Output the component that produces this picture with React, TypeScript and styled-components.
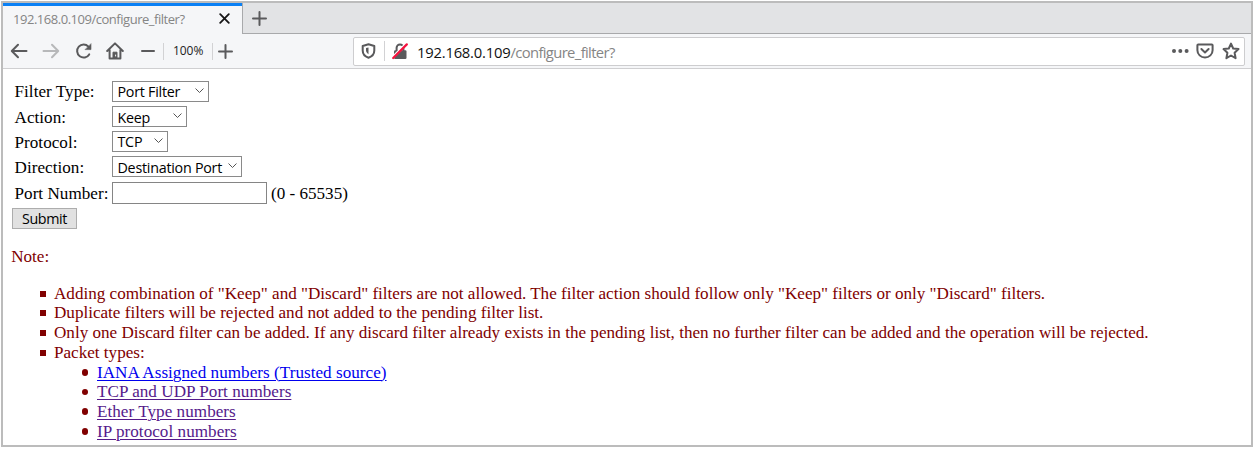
import React from "react";
import styled, { createGlobalStyle } from "styled-components";

const Global = createGlobalStyle`
  *, *::before, *::after { box-sizing: border-box; }
  body { margin: 0; background: #fff; overflow: hidden; }
`;
const ui = `"Open Sans", "Noto Sans", sans-serif`;
const serif = `"Liberation Serif", "Times New Roman", serif`;

const Window = styled.div`
  margin: 1px 0 0 1px;
  width: 1252px;
  height: 446px;
  border: 2px solid #bcbcbc;
  background: #fff;
  display: flex;
  flex-direction: column;
`;
const TabStrip = styled.div`
  height: 31px;
  flex: none;
  display: flex;
  background: #e2e3e5;
`;
const Tab = styled.div`
  width: 239px;
  border-top: 3px solid #0a80f5;
  background: #f5f6f8;
  display: flex;
  align-items: center;
  justify-content: space-between;
  padding: 0 12px 3px 10px;
`;
const TabTitle = styled.span`
  font: 13px/20px ${ui};
  letter-spacing: -0.47px;
  color: #858585;
  white-space: nowrap;
`;
const NewTab = styled.div`
  flex: 1;
  border-left: 1px solid #a8a9ab;
  border-bottom: 1px solid #a8a9ab;
  padding: 8px 0 0 9px;
  line-height: 0;
`;
const Toolbar = styled.div`
  height: 35px;
  flex: none;
  display: flex;
  align-items: center;
  background: #f5f6f8;
  border-bottom: 1px solid #cfcfd1;
  padding: 0 6px 0 7px;
`;
const NavIcons = styled.div`
  display: flex;
  align-items: center;
  width: 343px;
`;
const Icon = styled.svg<{ $gap?: number; $color?: string; $line?: number }>`
  display: block;
  flex: none;
  margin-right: ${(p) => p.$gap ?? 0}px;
  fill: none;
  stroke: ${(p) => p.$color ?? "#5a5a5c"};
  stroke-width: ${(p) => p.$line ?? 2};
  stroke-linecap: round;
  stroke-linejoin: round;
`;
const Divider = styled.span<{ $gap: number; $h: number }>`
  width: 1px;
  height: ${(p) => p.$h}px;
  background: #d2d2d4;
  margin-right: ${(p) => p.$gap}px;
`;
const Zoom = styled.span`
  width: 39px;
  font: 12px/18px ${ui};
  letter-spacing: -0.05px;
  color: #222;
`;
const UrlBar = styled.div`
  width: 892px;
  height: 29px;
  border: 1px solid #cdcdcf;
  border-radius: 2px;
  background: #fff;
  display: flex;
  align-items: center;
  padding: 0 4px 0 7px;
`;
const Url = styled.span`
  flex: 1;
  font: 14.8px/22px ${ui};
  letter-spacing: -0.22px;
  color: #111;
  padding-top: 2px;
`;
const UrlPath = styled.span`
  color: #858585;
  letter-spacing: -0.63px;
`;
const Page = styled.main`
  flex: 1;
  padding: 12px 0 0 9px;
  font: 17.1px/19.7px ${serif};
  color: #000;
`;
const Row = styled.div<{ $h: number }>`
  height: ${(p) => p.$h}px;
  display: flex;
  align-items: flex-start;
  padding-left: 2.5px;
`;
const Label = styled.label<{ $line?: number }>`
  width: 97.5px;
  white-space: nowrap;
  line-height: ${(p) => p.$line ?? 24}px;
  letter-spacing: 0.04px;
`;
const SelectBox = styled.div<{ $w: number; $line: number }>`
  width: ${(p) => p.$w}px;
  height: 21px;
  border: 1px solid #8a8a8a;
  display: flex;
  align-items: flex-start;
  justify-content: space-between;
  padding: 0 4px 0 4.5px;
  font: 14.3px/${(p) => p.$line}px ${ui};
  letter-spacing: -0.25px;
  white-space: nowrap;
  color: #000;

  svg {
    margin-top: 6px;
  }
`;
const PortInput = styled.input`
  width: 155px;
  height: 22px;
  border: 1px solid #858585;
  padding: 0 4px;
  outline: none;
  border-radius: 0;
`;
const Hint = styled.span`
  margin-left: 4px;
  line-height: 23px;
`;
const Submit = styled.button`
  display: block;
  width: 65px;
  height: 21px;
  padding: 0;
  border: 1px solid #adadad;
  border-radius: 0;
  background: #e1e1e1;
  font: 14.3px/19px ${ui};
  letter-spacing: -0.4px;
  color: #000;
`;
const Note = styled.section`
  color: #800000;
  margin-top: 18px;
`;
const NoteTitle = styled.div`
  margin-left: -0.8px;
`;
const Rules = styled.ul`
  list-style: none;
  margin: 17px 0 0;
  padding: 0 0 0 42px;
`;
const Rule = styled.li`
  position: relative;
  white-space: nowrap;
  &::before {
    content: "";
    position: absolute;
    left: -14.4px;
    top: 7px;
    width: 6px;
    height: 6px;
    background: #800000;
  }
`;
const Links = styled.ul`
  list-style: none;
  margin: 0;
  padding: 0 0 0 43px;
`;
const LinkItem = styled.li`
  position: relative;
  &::before {
    content: "";
    position: absolute;
    left: -15.2px;
    top: 6.5px;
    width: 6.5px;
    height: 6.5px;
    border-radius: 50%;
    background: #800000;
  }
`;
const Link = styled.a<{ $visited?: boolean }>`
  color: ${(p) => (p.$visited ? "#551a8b" : "#0000ee")};
  letter-spacing: 0.04px;
  text-decoration: underline;
  text-decoration-thickness: 1px;
  text-underline-offset: 2px;
`;

const Select = ({ w, line = 19, children }: { w: number; line?: number; children: string }) => (
  <SelectBox $w={w} $line={line}>
    <span>{children}</span>
    <Icon width="9" height="6" viewBox="0 0 9 6" $color="#555" $line={1}>
      <path d="M0.8 0.8 4.5 4.5 8.2 0.8" />
    </Icon>
  </SelectBox>
);

export default function App() {
  return (
    <>
      <Global />
      <Window>
        <TabStrip>
          <Tab>
            <TabTitle>192.168.0.109/configure_filter?</TabTitle>
            <Icon width="11" height="11" viewBox="0 0 11 11" $color="#161616" $line={1.8}>
              <path d="M1.2 1.2 9.8 9.8M9.8 1.2 1.2 9.8" />
            </Icon>
          </Tab>
          <NewTab>
            <Icon width="15" height="15" viewBox="0 0 15 15">
              <path d="M7.5 1V14M1 7.5H14" />
            </Icon>
          </NewTab>
        </TabStrip>
        <Toolbar>
          <NavIcons>
            <Icon width="18" height="16" viewBox="0 0 18 16" $gap={14}>
              <path d="M16.5 8H2M8 1.8 1.8 8 8 14.2" />
            </Icon>
            <Icon width="18" height="16" viewBox="0 0 18 16" $gap={15} $color="#b7b8ba">
              <path d="M1.5 8H16M10 1.8 16.2 8 10 14.2" />
            </Icon>
            <Icon width="18" height="18" viewBox="0 0 18 18" $gap={13}>
              <path d="M14.2 12.4A6.5 6.5 0 1 1 13.4 4.6L15 6.2" />
              <path d="M16 2V7.6H10.4Z" fill="#5a5a5c" strokeWidth="0.6" />
            </Icon>
            <Icon width="18" height="18" viewBox="0 0 18 18" $gap={17}>
              <path d="M1.2 9 9 1.4 16.8 9M3.6 8V16.4H14.4V8" />
              <path d="M7 16V10.2H11V16Z" fill="#5a5a5c" strokeWidth="1" />
              <path d="M9.6 13V14" stroke="#f5f6f8" strokeWidth="1" />
            </Icon>
            <Icon width="14" height="14" viewBox="0 0 14 14" $gap={8}>
              <path d="M1 7H13" />
            </Icon>
            <Divider $h={17} $gap={9} />
            <Zoom>100%</Zoom>
            <Divider $h={17} $gap={5} />
            <Icon width="15" height="15" viewBox="0 0 15 15">
              <path d="M7.5 1V14M1 7.5H14" />
            </Icon>
          </NavIcons>
          <UrlBar>
            <Icon width="15" height="16" viewBox="0 0 15 16" $gap={8}>
              <path d="M7.5 1.3 13.3 3V7.5C13.3 11 10.5 13.7 7.5 14.7 4.5 13.7 1.7 11 1.7 7.5V3Z" />
              <path d="M7.5 4.5V11.3C5.6 10 5 8.6 5 7V5Z" fill="#5a5a5c" stroke="none" />
            </Icon>
            <Divider $h={20} $gap={7} />
            <Icon width="16" height="17" viewBox="0 0 16 17" $gap={9}>
              <path d="M4.6 8V4.8a3.4 3.4 0 0 1 6.8 0V8" />
              <rect x="2" y="7.2" width="12.5" height="8.8" rx="1.2" fill="#5a5a5c" stroke="none" />
              <path d="M1.2 14 13.6 1.6" stroke="#fff" strokeWidth="3" strokeLinecap="butt" />
              <path d="M1.2 15 14.8 1.4" stroke="#f5123e" strokeWidth="2.2" />
            </Icon>
            <Url>
              192.168.0.109<UrlPath>/configure_filter?</UrlPath>
            </Url>
            <Icon width="18" height="6" viewBox="0 0 18 6" $gap={7} $color="none">
              <g fill="#5a5a5c">
                <circle cx="3" cy="3" r="2" />
                <circle cx="9.3" cy="3" r="2" />
                <circle cx="15.6" cy="3" r="2" />
              </g>
            </Icon>
            <Icon width="18" height="16" viewBox="0 0 18 16" $gap={8}>
              <path d="M2.2 1.5H15.8Q16.6 1.5 16.6 2.3V7.2A7.6 7.3 0 0 1 1.4 7.2V2.3Q1.4 1.5 2.2 1.5Z" />
              <path d="M5.4 6 9 9.4 12.6 6" />
            </Icon>
            <Icon width="18" height="18" viewBox="0 0 18 18">
              <path d="M9 1.6 11.2 6.5 16.5 7.1 12.6 10.8 13.6 16.2 9 13.5 4.4 16.2 5.4 10.8 1.5 7.1 6.8 6.5Z" />
            </Icon>
          </UrlBar>
        </Toolbar>
        <Page>
          <Row $h={25}>
            <Label $line={22}>Filter Type:</Label>
            <Select w={97}>Port Filter</Select>
          </Row>
          <Row $h={25}>
            <Label>Action:</Label>
            <Select w={75} line={21}>Keep</Select>
          </Row>
          <Row $h={25}>
            <Label $line={23}>Protocol:</Label>
            <Select w={56}>TCP</Select>
          </Row>
          <Row $h={26}>
            <Label>Direction:</Label>
            <Select w={130} line={21}>Destination Port</Select>
          </Row>
          <Row $h={26}>
            <Label>Port Number:</Label>
            <PortInput />
            <Hint>(0 - 65535)</Hint>
          </Row>
          <Submit>Submit</Submit>
          <Note>
            <NoteTitle>Note:</NoteTitle>
            <Rules>
              <Rule>
                Adding combination of "Keep" and "Discard" filters are not allowed. The filter action should follow only
                "Keep" filters or only "Discard" filters.
              </Rule>
              <Rule>Duplicate filters will be rejected and not added to the pending filter list.</Rule>
              <Rule>
                Only one Discard filter can be added. If any discard filter already exists in the pending list, then no
                further filter can be added and the operation will be rejected.
              </Rule>
              <Rule>
                Packet types:
                <Links>
                  <LinkItem>
                    <Link>IANA Assigned numbers (Trusted source)</Link>
                  </LinkItem>
                  <LinkItem>
                    <Link $visited>TCP and UDP Port numbers</Link>
                  </LinkItem>
                  <LinkItem>
                    <Link $visited>Ether Type numbers</Link>
                  </LinkItem>
                  <LinkItem>
                    <Link $visited>IP protocol numbers</Link>
                  </LinkItem>
                </Links>
              </Rule>
            </Rules>
          </Note>
        </Page>
      </Window>
    </>
  );
}
